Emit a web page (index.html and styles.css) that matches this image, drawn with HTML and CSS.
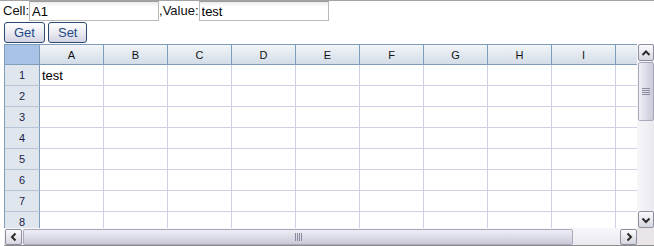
FILE: index.html
```html
<!DOCTYPE html>
<html>
<head>
    <meta charset="UTF-8">
    <title>Cell value</title>
    <link rel="stylesheet" href="styles.css">
</head>
<body>
    <div class="bar">
        <span class="lbl">Cell:</span><input class="field" type="text" value="A1"><span class="lbl">,Value:</span><input class="field" type="text" value="test">
    </div>
    <div class="btns">
        <button class="btn">Get</button>
        <button class="btn">Set</button>
    </div>
    <div class="sheet">
        <div class="view">
            <table class="grid">
                <tr class="head">
                    <th class="corner-cell"></th>
                    <th>A</th><th>B</th><th>C</th><th>D</th><th>E</th><th>F</th><th>G</th><th>H</th><th>I</th><th>J</th>
                </tr>
                <tr><th>1</th><td>test</td><td></td><td></td><td></td><td></td><td></td><td></td><td></td><td></td><td></td></tr>
                <tr><th>2</th><td></td><td></td><td></td><td></td><td></td><td></td><td></td><td></td><td></td><td></td></tr>
                <tr><th>3</th><td></td><td></td><td></td><td></td><td></td><td></td><td></td><td></td><td></td><td></td></tr>
                <tr><th>4</th><td></td><td></td><td></td><td></td><td></td><td></td><td></td><td></td><td></td><td></td></tr>
                <tr><th>5</th><td></td><td></td><td></td><td></td><td></td><td></td><td></td><td></td><td></td><td></td></tr>
                <tr><th>6</th><td></td><td></td><td></td><td></td><td></td><td></td><td></td><td></td><td></td><td></td></tr>
                <tr><th>7</th><td></td><td></td><td></td><td></td><td></td><td></td><td></td><td></td><td></td><td></td></tr>
                <tr><th>8</th><td></td><td></td><td></td><td></td><td></td><td></td><td></td><td></td><td></td><td></td></tr>
                <tr><th>9</th><td></td><td></td><td></td><td></td><td></td><td></td><td></td><td></td><td></td><td></td></tr>
            </table>
        </div>
        <!-- vertical scrollbar -->
        <div class="vbar">
            <div class="sbtn">
                <svg width="10" height="10" viewBox="0 0 10 10"><path d="M1.5 7 L5 3.5 L8.5 7" fill="none" stroke="#2b2b2b" stroke-width="2"/></svg>
            </div>
            <div class="vthumb">
                <svg width="8" height="9" viewBox="0 0 8 9"><path d="M0 1.5H8M0 3.5H8M0 5.5H8M0 7.5H8" stroke="#8a8aa0" stroke-width="1"/></svg>
            </div>
            <div class="vtrack"></div>
            <div class="sbtn">
                <svg width="10" height="10" viewBox="0 0 10 10"><path d="M1.5 3.5 L5 7 L8.5 3.5" fill="none" stroke="#2b2b2b" stroke-width="2"/></svg>
            </div>
        </div>
        <!-- horizontal scrollbar -->
        <div class="hbar">
            <div class="sbtn">
                <svg width="10" height="10" viewBox="0 0 10 10"><path d="M6.5 1.5 L3 5 L6.5 8.5" fill="none" stroke="#2b2b2b" stroke-width="2"/></svg>
            </div>
            <div class="hthumb">
                <svg width="9" height="8" viewBox="0 0 9 8"><path d="M1.5 0V8M3.5 0V8M5.5 0V8M7.5 0V8" stroke="#8a8aa0" stroke-width="1"/></svg>
            </div>
            <div class="htrack"></div>
            <div class="sbtn">
                <svg width="10" height="10" viewBox="0 0 10 10"><path d="M3.5 1.5 L7 5 L3.5 8.5" fill="none" stroke="#2b2b2b" stroke-width="2"/></svg>
            </div>
        </div>
        <div class="corner"></div>
    </div>
</body>
</html>
```

FILE: styles.css
```css
body {
    margin: 0;
    border-top: 1px solid #a3a3a3;
    font: 13px "Liberation Sans", Arial, sans-serif;
    color: #111;
    background: #fff;
    overflow: hidden;
}

.bar {
    display: flex;
    align-items: center;
    height: 20px;
    padding-left: 3px;
}

.lbl {
    line-height: 20px;
}

.field {
    box-sizing: border-box;
    width: 130px;
    height: 20px;
    margin: 0;
    padding: 0 2px;
    border: 1px solid #b9b9b9;
    border-top-color: #9c9c9c;
    background: linear-gradient(#ececec, #fff 5px);
    font: 13px "Liberation Sans", Arial, sans-serif;
    color: #000;
    outline: none;
}

.btns {
    display: flex;
    gap: 3px;
    padding: 1px 0 0 4px;
    height: 22px;
}

.btn {
    box-sizing: border-box;
    height: 21px;
    margin: 0;
    padding: 0 9px;
    border: 1px solid #2b4a72;
    border-radius: 3px;
    background: linear-gradient(#ffffff, #e9e9f1 55%, #d3d3e3);
    font: 13px "Liberation Sans", Arial, sans-serif;
    color: #1f4a86;
    line-height: 19px;
}

.sheet {
    display: grid;
    grid-template-columns: 633px 17px;
    grid-template-rows: 184px 18px;
    margin-left: 4px;
    width: 650px;
}

.view {
    overflow: hidden;
    border-left: 1px solid #7f9db9;
    border-top: 1px solid #7f9db9;
    box-sizing: border-box;
}

.grid {
    border-collapse: separate;
    border-spacing: 0;
    table-layout: fixed;
    width: 675px;
}

.grid th,
.grid td {
    box-sizing: border-box;
    padding: 0;
    overflow: hidden;
    white-space: nowrap;
}

.grid th {
    width: 35px;
    height: 21px;
    background: #dfe6ee;
    border-right: 1px solid #7f9db9;
    border-bottom: 1px solid #b6c6d8;
    font: 11px "Liberation Sans", Arial, sans-serif;
    color: #1c1c46;
    text-align: center;
    font-weight: normal;
}

.grid td {
    width: 64px;
    height: 21px;
    border-right: 1px solid #d2d0e6;
    border-bottom: 1px solid #d2d0e6;
    font: 13px "Liberation Sans", Arial, sans-serif;
    color: #000;
    padding-left: 2px;
    vertical-align: middle;
}

.grid .head th {
    width: 64px;
    height: 20px;
    background: linear-gradient(#f2f5f9, #dfe6ee 60%, #d3dce7);
    border-bottom: 1px solid #7f9db9;
    color: #111;
}

.grid .head .corner-cell {
    width: 35px;
    background: #a9c3e8;
}

.vbar {
    display: flex;
    flex-direction: column;
    padding-left: 1px;
    background: linear-gradient(to right, #f7f7fa, #e9e9f0);
}

.sbtn {
    box-sizing: border-box;
    width: 16px;
    height: 17px;
    flex: none;
    display: flex;
    align-items: center;
    justify-content: center;
    border: 1px solid #8e8e9e;
    border-radius: 2px;
    background: linear-gradient(#fbfbfd, #e4e4ec 60%, #d6d6e0);
}

.vthumb {
    box-sizing: border-box;
    height: 59px;
    margin-top: 1px;
    display: flex;
    align-items: center;
    justify-content: center;
    border: 1px solid #a9a9bb;
    border-radius: 2px;
    background: linear-gradient(to right, #eeeef5, #dcdce8 50%, #c9c9d8);
}

.vtrack {
    flex: 1;
}

.hbar {
    display: flex;
    box-sizing: border-box;
    padding: 1px 0 0 1px;
    border-bottom: 1px solid #8d8d8d;
    background: linear-gradient(#f7f7fa, #e9e9f0);
}

.hbar .sbtn {
    width: 17px;
    height: 16px;
}

.hthumb {
    box-sizing: border-box;
    width: 550px;
    margin-left: 1px;
    display: flex;
    align-items: center;
    justify-content: center;
    border: 1px solid #a9a9bb;
    border-radius: 2px;
    background: linear-gradient(#eeeef5, #dcdce8 50%, #c9c9d8);
}

.htrack {
    flex: 1;
}

.corner {
    background: #e8e4e8;
    border-bottom: 1px solid #8d8d8d;
    box-sizing: border-box;
}
```
